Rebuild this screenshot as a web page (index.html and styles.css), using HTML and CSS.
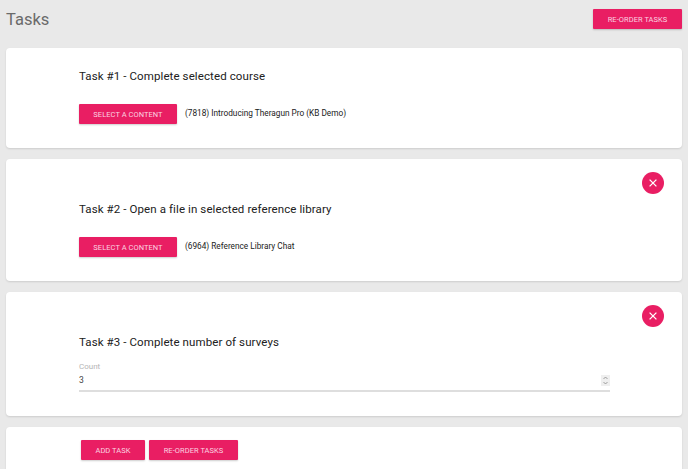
FILE: index.html
```html
<!DOCTYPE html>
<html lang="en">
<head>
<meta charset="utf-8">
<title>Tasks</title>
<link rel="stylesheet" href="styles.css">
</head>
<body>
<header class="page-header">
  <h1 class="page-title">Tasks</h1>
  <button class="btn btn-top">RE-ORDER TASKS</button>
</header>
<section class="card card-one">
  <h2 class="task-title">Task #1 - Complete selected course</h2>
  <div class="content-row">
    <button class="btn btn-select">SELECT A CONTENT</button>
    <span class="content-name">(7818) Introducing Theragun Pro (KB Demo)</span>
  </div>
</section>
<section class="card card-two">
  <button class="close" aria-label="Remove"><svg viewBox="0 0 10 10" width="10" height="10"><path d="M1.6 1.6l6.8 6.8M8.4 1.6l-6.8 6.8" stroke="#fff" stroke-width="1.3" fill="none"/></svg></button>
  <h2 class="task-title">Task #2 - Open a file in selected reference library</h2>
  <div class="content-row">
    <button class="btn btn-select">SELECT A CONTENT</button>
    <span class="content-name">(6964) Reference Library Chat</span>
  </div>
</section>
<section class="card card-three">
  <button class="close" aria-label="Remove"><svg viewBox="0 0 10 10" width="10" height="10"><path d="M1.6 1.6l6.8 6.8M8.4 1.6l-6.8 6.8" stroke="#fff" stroke-width="1.3" fill="none"/></svg></button>
  <h2 class="task-title">Task #3 - Complete number of surveys</h2>
  <div class="field">
    <div class="field-label">Count</div>
    <div class="field-input">
      <span class="field-value">3</span>
      <span class="spinner"><svg viewBox="0 0 9 11" width="9" height="11"><path d="M2.5 4l2-2 2 2M2.5 7l2 2 2-2" stroke="#888" stroke-width=".8" fill="none"/></svg></span>
    </div>
  </div>
</section>
<section class="card card-actions">
  <button class="btn btn-add">ADD TASK</button>
  <button class="btn btn-reorder">RE-ORDER TASKS</button>
</section>
</body>
</html>
```
FILE: styles.css
```css
* { box-sizing: border-box; }
html, body { height: 100%; }
body {
  margin: 0;
  padding: 0 6px;
  background: #e9e9e9;
  font-family: Roboto, "Liberation Sans", sans-serif;
  color: #212121;
  overflow: hidden;
}
.page-header {
  height: 48px;
  display: flex;
  justify-content: space-between;
  align-items: flex-start;
  padding-top: 9px;
}
.page-title {
  margin: 1px 0 0;
  font-size: 16.5px;
  line-height: 20px;
  font-weight: 400;
  color: #6a6a6a;
}
.btn {
  border: 0;
  margin: 0;
  padding: 0;
  height: 20px;
  border-radius: 1px;
  background: #e91e63;
  color: #fbd3e0;
  font-family: inherit;
  font-size: 7.5px;
  font-weight: 400;
  letter-spacing: .05px;
  box-shadow: 0 1px 2px rgba(0,0,0,.2);
}
.btn-top { width: 89px; }
.card {
  position: relative;
  background: #fff;
  border-radius: 4px;
  margin-bottom: 11px;
  padding-left: 73px;
  box-shadow: 0 1px 2px rgba(0,0,0,.12);
}
.card-one { height: 100px; padding-top: 20px; }
.card-two { height: 122px; padding-top: 42px; }
.card-three { height: 124px; padding-top: 42px; }
.card-actions { height: 60px; padding: 13px 0 0 75px; display: flex; gap: 4px; align-items: flex-start; margin-bottom: 0; }
.task-title {
  margin: 0;
  font-size: 11.5px;
  line-height: 16px;
  font-weight: 400;
  letter-spacing: .1px;
}
.content-row {
  display: flex;
  align-items: flex-start;
  margin-top: 20px;
}
.btn-select { width: 98px; }
.content-name {
  margin-left: 8px;
  font-size: 8.25px;
  line-height: 18px;
}
.btn-add { width: 64px; }
.btn-reorder { width: 89px; }
.close {
  position: absolute;
  top: 13px;
  right: 18.5px;
  width: 22px;
  height: 22px;
  border: 0;
  padding: 0;
  border-radius: 50%;
  background: #e91e63;
  display: flex;
  align-items: center;
  justify-content: center;
}
.field {
  margin-top: 12px;
  width: 531px;
}
.field-label {
  font-size: 8px;
  line-height: 10px;
  color: #b5b5b5;
}
.field-input {
  display: flex;
  justify-content: space-between;
  align-items: center;
  height: 20px;
  padding-bottom: 2px;
  border-bottom: 2px solid #dedede;
}
.field-value {
  font-size: 8.5px;
  color: #444;
}
.spinner {
  display: flex;
  background: #efefef;
}
```
